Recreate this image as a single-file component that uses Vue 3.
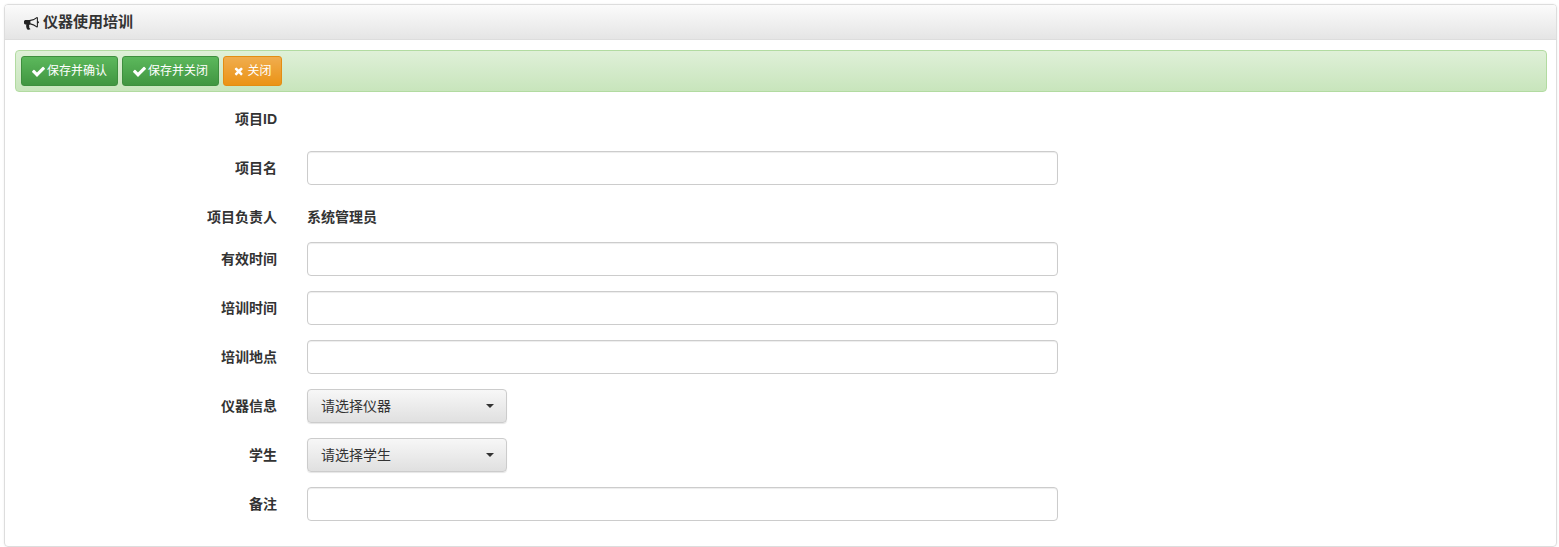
<script setup>
const check = 'M1671 566q0 40-28 68l-724 724-136 136q-28 28-68 28t-68-28l-136-136-362-362q-28-28-28-68t28-68l136-136q28-28 68-28t68 28l294 295 656-657q28-28 68-28t68 28l136 136q28 28 28 68z'
const times = 'M1490 1322q0 40-28 68l-136 136q-28 28-68 28t-68-28l-294-294-294 294q-28 28-68 28t-68-28l-136-136q-28-28-28-68t28-68l294-294-294-294q-28-28-28-68t28-68l136-136q28-28 68-28t68 28l294 294 294-294q28-28 68-28t68 28l136 136q28 28 28 68t-28 68l-294 294 294 294q28 28 28 68z'
const bullhorn = 'M1664 736q53 0 90.5 37.5t37.5 90.5-37.5 90.5-90.5 37.5v384q0 52-38 90t-90 38q-417-347-812-380-58 19-91 66t-31 100.5 40 92.5q-20 33-23 65.5t6 58 33.5 55 48 50 61.5 50.5q-29 58-111.5 83t-168.5 11.5-132-55.5q-7-23-29.5-87.5t-32-94.5-23-89-15-101 3.5-98.5 22-110.5h-122q-66 0-113-47t-47-113v-192q0-66 47-113t113-47h480q435 0 896-384 52 0 90 38t38 90v384zm-128 604v-954q-394 302-768 343v270q377 42 768 341z'
</script>

<template>
  <div class="page">
    <section class="panel">
      <header class="head">
        <svg class="horn" viewBox="0 0 1792 1792"><path :d="bullhorn" /></svg>
        <span>仪器使用培训</span>
      </header>
      <div class="body">
        <div class="toolbar">
          <button class="btn green"><svg class="ic wide" viewBox="121 0 1550 1792"><path :d="check" /></svg>保存并确认</button>
          <button class="btn green"><svg class="ic wide" viewBox="121 0 1550 1792"><path :d="check" /></svg>保存并关闭</button>
          <button class="btn orange"><svg class="ic narrow" viewBox="192 0 1408 1792"><path :d="times" /></svg>关闭</button>
        </div>
        <form class="form" @submit.prevent>
          <div class="row tall"><label>项目ID</label></div>
          <div class="row"><label>项目名</label><input class="field" type="text" /></div>
          <div class="row static"><label>项目负责人</label><span class="value">系统管理员</span></div>
          <div class="row"><label>有效时间</label><input class="field" type="text" /></div>
          <div class="row"><label>培训时间</label><input class="field" type="text" /></div>
          <div class="row"><label>培训地点</label><input class="field" type="text" /></div>
          <div class="row"><label>仪器信息</label><div class="select"><span>请选择仪器</span><i class="caret"></i></div></div>
          <div class="row"><label>学生</label><div class="select"><span>请选择学生</span><i class="caret"></i></div></div>
          <div class="row last"><label>备注</label><input class="field" type="text" /></div>
        </form>
      </div>
    </section>
  </div>
</template>

<style>
html, body { margin: 0; background: #fff; }
</style>

<style scoped>
.page {
  box-sizing: border-box;
  height: 547px;
  padding: 4px 2px 0 4px;
  font-family: "Liberation Sans", "Noto Sans CJK SC", sans-serif;
  font-size: 14px;
  line-height: 20px;
  color: #333;
}
.panel {
  box-sizing: border-box;
  height: 543px;
  border: 1px solid #ddd;
  border-radius: 4px;
  box-shadow: 0 0 2px rgba(0, 0, 0, 0.08);
  overflow: hidden;
}
.head {
  box-sizing: border-box;
  height: 35px;
  display: flex;
  align-items: center;
  gap: 4px;
  padding: 0 0 0 19px;
  font-size: 15px;
  font-weight: 700;
  color: #333;
  background: linear-gradient(to bottom, #fbfbfb, #e5e5e5);
  border-bottom: 1px solid #ddd;
}
.horn { width: 15px; height: 15px; fill: #222; }
.body { padding: 10px 9px 0 10px; }
.toolbar {
  box-sizing: border-box;
  height: 42px;
  display: flex;
  align-items: center;
  gap: 4px;
  padding: 0 5px;
  border: 1px solid #b2dba1;
  border-radius: 4px;
  background: linear-gradient(to bottom, #dff0d8, #c8e5bc);
}
.btn {
  box-sizing: border-box;
  height: 30px;
  display: inline-flex;
  align-items: center;
  padding: 0 10px;
  font: inherit;
  font-size: 12px;
  color: #fff;
  border-radius: 3px;
  cursor: pointer;
}
.green {
  gap: 2px;
  background: linear-gradient(to bottom, #5cb85c, #419641);
  border: 1px solid #3e8f3e;
}
.orange {
  gap: 4px;
  background: linear-gradient(to bottom, #f0ad4e, #eb9316);
  border: 1px solid #e38d13;
}
.ic { height: 15px; fill: #fff; }
.wide { width: 13px; }
.narrow { width: 9.43px; height: 12px; }
.form { padding-top: 10px; }
.row {
  display: flex;
  align-items: center;
  margin-bottom: 15px;
  min-height: 34px;
}
.row.tall { height: 34px; }
.row.static { min-height: 27px; height: 27px; align-items: flex-start; }
.row.static label, .row.static .value { padding-top: 7px; }
.row.last { margin-bottom: 0; }
label {
  flex: none;
  width: 262px;
  margin-right: 30px;
  text-align: right;
  font-weight: 700;
}
.value { color: #333; font-weight: 700; }
.field {
  box-sizing: border-box;
  width: 751px;
  height: 34px;
  padding: 6px 12px;
  font: inherit;
  color: #555;
  background: #fff;
  border: 1px solid #ccc;
  border-radius: 4px;
  box-shadow: inset 0 1px 1px rgba(0, 0, 0, 0.075);
  outline: none;
}
.select {
  box-sizing: border-box;
  width: 200px;
  height: 34px;
  display: flex;
  align-items: center;
  justify-content: space-between;
  padding: 0 12px 0 13px;
  color: #333;
  background: linear-gradient(to bottom, #f7f7f7, #e0e0e0);
  border: 1px solid #ccc;
  border-radius: 4px;
  box-shadow: 0 1px 1px rgba(0, 0, 0, 0.1);
}
.caret {
  width: 0;
  height: 0;
  border-top: 4px solid #333;
  border-left: 4px solid transparent;
  border-right: 4px solid transparent;
}
</style>
